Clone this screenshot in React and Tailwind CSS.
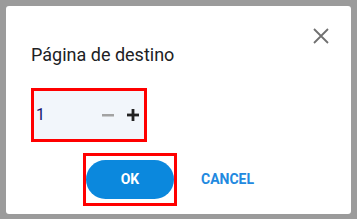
import { useState } from "react";

export default function App() {
  const [page, setPage] = useState(1);

  return (
    <div className="w-[357px] h-[219px] bg-[#9b9b9b] pt-[6px] pl-[6px] font-['Roboto',sans-serif]">
      <div className="relative w-[345px] h-[208px] bg-white rounded-[3px] pt-[37px] pl-[25px]">
        {/* close */}
        <button className="absolute top-[18px] right-[18px] w-6 h-6 flex items-center justify-center text-[#707070]">
          <svg width="24" height="24" viewBox="0 0 24 24">
            <path d="M5 5L19 19M19 5L5 19" stroke="currentColor" strokeWidth="1.8" fill="none" />
          </svg>
        </button>

        <h2 className="text-[18px] leading-[24px] text-[#202124] font-normal">Página de destino</h2>

        {/* page stepper */}
        <div className="mt-[21px] w-[116px] h-[54px] border-[3px] border-[#ff0000]">
          <div className="h-full bg-[#f2f6fb] flex items-center pl-[2px] pr-[5px]">
            <span className="text-[16px] leading-none text-[#15156e] flex-1">{page}</span>
            <button onClick={() => setPage(Math.max(1, page - 1))} className="w-3 h-3 flex items-center">
              <svg width="12" height="12" viewBox="0 0 12 12">
                <rect x="0" y="5" width="12" height="2.5" fill="#a3a3a3" />
              </svg>
            </button>
            <button onClick={() => setPage(page + 1)} className="ml-[13px] w-3 h-3 flex items-center">
              <svg width="12" height="12" viewBox="0 0 12 12">
                <rect x="0" y="4.6" width="12" height="2.8" fill="#222222" />
                <rect x="4.6" y="0" width="2.8" height="12" fill="#222222" />
              </svg>
            </button>
          </div>
        </div>

        {/* actions */}
        <div className="mt-[11px] ml-[52px] flex items-center">
          <div className="w-[94px] h-[53px] border-[3px] border-[#ff0000] flex items-center">
            <button className="w-[88px] h-[39px] rounded-full bg-[#0b88dd] text-white text-[14px] font-bold">OK</button>
          </div>
          <button className="ml-[8px] px-4 h-[36px] text-[#2289e0] text-[14px] font-bold">CANCEL</button>
        </div>
      </div>
    </div>
  );
}
